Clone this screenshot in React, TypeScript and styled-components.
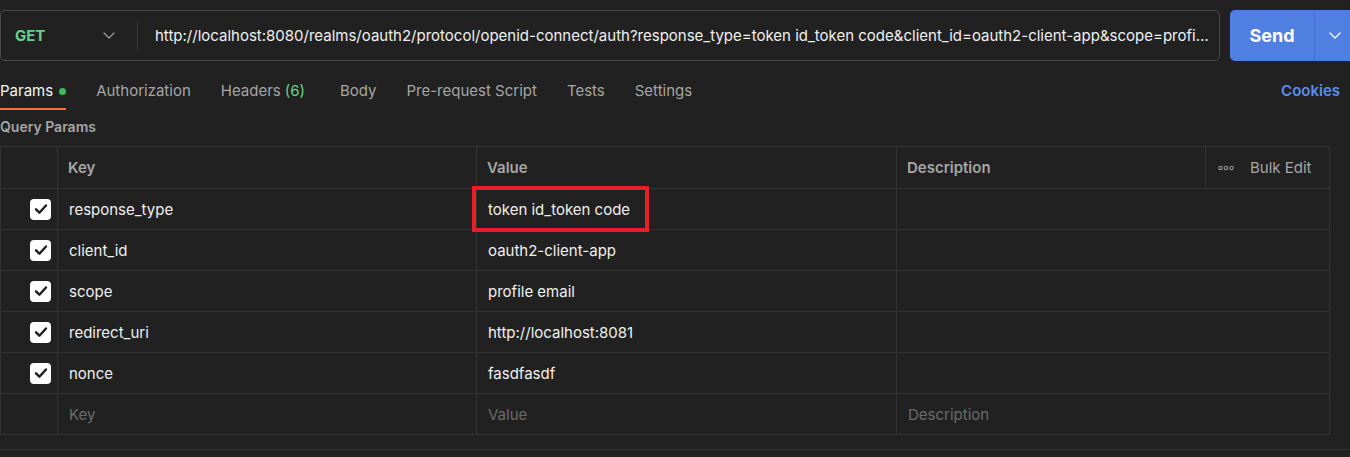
import React from "react";
import styled, { createGlobalStyle } from "styled-components";

const Global = createGlobalStyle`
  html, body { margin: 0; padding: 0; background: #212121; }
  body { font-family: Inter, "Noto Sans", "Liberation Sans", sans-serif; overflow: hidden; width: 1350px; height: 457px; }
`;

const Page = styled.div`
  padding-top: 10px;
  width: 1350px;
  color: #f0f0f0;
`;

const TopBar = styled.div`
  display: flex;
  gap: 10px;
  height: 51px;
  margin-right: -4px;
`;

const UrlBox = styled.div`
  flex: 1;
  min-width: 0;
  display: flex;
  align-items: center;
  border: 1px solid #4a4a4a;
  border-radius: 5px;
  box-sizing: border-box;
`;

const Method = styled.div`
  width: 137px;
  box-sizing: border-box;
  padding: 0 22px 0 14px;
  display: flex;
  align-items: center;
  justify-content: space-between;
  color: #6bcf8a;
  font-weight: 700;
  font-size: 15px;
  border-right: 1px solid #3c3c3c;
  height: 30px;
`;

const UrlText = styled.div`
  flex: 1;
  min-width: 0;
  padding: 0 10px 0 17px;
  font-size: 15px;
  color: #f0f0f0;
  white-space: nowrap;
  overflow: hidden;
  text-overflow: ellipsis;
`;

const SendGroup = styled.div`
  display: flex;
  background: #4f7fe0;
  border-radius: 5px;
  width: 124px;
  flex: none;
`;

const SendMain = styled.div`
  width: 84px;
  display: flex;
  align-items: center;
  justify-content: center;
  color: #fff;
  font-weight: 700;
  font-size: 18px;
  border-right: 1px solid #4472cc;
`;

const SendDrop = styled.div`
  flex: 1;
  display: flex;
  align-items: center;
  justify-content: center;
`;

const Tabs = styled.div`
  display: flex;
  align-items: flex-end;
  margin-top: 11px;
`;

const TabList = styled.div`
  display: flex;
  gap: 30px;
  flex: 1;
`;

const Tab = styled.div<{ $active?: boolean; $extra?: number }>`
  display: flex;
  align-items: center;
  gap: 6px;
  padding: 8px 0 6px;
  margin-right: ${(p) => p.$extra ?? 0}px;
  line-height: 22px;
  font-size: 15px;
  color: ${(p) => (p.$active ? "#f5f5f5" : "#a6a6a6")};
  border-bottom: 2px solid ${(p) => (p.$active ? "#ff6c37" : "transparent")};
`;

const Count = styled.span`
  color: #6bcf8a;
  margin-left: 4px;
`;

const Dot = styled.span`
  width: 7px;
  height: 7px;
  border-radius: 50%;
  background: #3fb95c;
`;

const Cookies = styled.div`
  color: #5b8def;
  font-weight: 600;
  font-size: 15px;
  padding: 8px 10px 8px 0;
  line-height: 22px;
`;

const SectionTitle = styled.div`
  margin-top: 7px;
  margin-bottom: 9px;
  line-height: 20px;
  font-size: 14px;
  font-weight: 600;
  color: #a6a6a6;
`;

const Table = styled.div`
  width: 1330px;
  box-sizing: border-box;
  border: 1px solid #333333;
  border-bottom: none;
`;

const Row = styled.div<{ $head?: boolean }>`
  display: grid;
  grid-template-columns: 56px 419px 420px 1fr;
  height: ${(p) => (p.$head ? "42px" : "41px")};
  box-sizing: border-box;
  border-bottom: 1px solid #333333;
`;

const Cell = styled.div<{ $head?: boolean; $muted?: boolean; $pad?: number }>`
  display: flex;
  align-items: center;
  padding-left: ${(p) => p.$pad ?? 11}px;
  border-left: 1px solid #333333;
  font-size: 15px;
  font-weight: ${(p) => (p.$head ? 600 : 400)};
  color: ${(p) => (p.$head ? "#a6a6a6" : p.$muted ? "#6b6b6b" : "#f0f0f0")};
  min-width: 0;
  &:first-child { border-left: none; justify-content: flex-end; padding: 0 6px 0 0; }
`;

const DescHead = styled(Cell)`
  display: grid;
  grid-template-columns: 1fr 124px;
  padding-left: 0;
`;

const DescLabel = styled.div`
  padding-left: 10px;
  display: flex;
  align-items: center;
`;

const BulkEdit = styled.div`
  display: flex;
  align-items: center;
  gap: 16px;
  padding-left: 12px;
  height: 100%;
  border-left: 1px solid #333333;
  font-weight: 400;
  color: #a6a6a6;
`;

const Check = styled.div`
  width: 21px;
  height: 21px;
  border-radius: 4px;
  background: #ffffff;
  display: flex;
  align-items: center;
  justify-content: center;
`;

const Highlight = styled.span`
  position: relative;
  &::after {
    content: "";
    position: absolute;
    left: -16px;
    right: -19px;
    top: -14px;
    bottom: -13px;
    border: 4.5px solid #e81e2a;
  }
`;

const BottomLine = styled.div`
  margin-top: 14px;
  border-top: 1px solid #333333;
`;

const Chevron = ({ color = "#9a9a9a" }: { color?: string }) => (
  <svg width="12" height="7" viewBox="0 0 12 7" fill="none">
    <path d="M1 1l5 5 5-5" stroke={color} strokeWidth="1.3" strokeLinecap="round" strokeLinejoin="round" />
  </svg>
);

const Dots = () => (
  <svg width="16" height="6" viewBox="0 0 16 6" fill="none">
    <circle cx="2.5" cy="3" r="1.7" stroke="#9a9a9a" strokeWidth="1.1" />
    <circle cx="8" cy="3" r="1.7" stroke="#9a9a9a" strokeWidth="1.1" />
    <circle cx="13.5" cy="3" r="1.7" stroke="#9a9a9a" strokeWidth="1.1" />
  </svg>
);

const CheckBox = () => (
  <Check>
    <svg width="14" height="12" viewBox="0 0 14 12" fill="none">
      <path d="M2 6.3l3.4 3.4L12 2.5" stroke="#1e1e1e" strokeWidth="2.4" strokeLinecap="round" strokeLinejoin="round" />
    </svg>
  </Check>
);

const params = [
  { key: "response_type", value: "token id_token code", mark: true },
  { key: "client_id", value: "oauth2-client-app" },
  { key: "scope", value: "profile email" },
  { key: "redirect_uri", value: "http://localhost:8081" },
  { key: "nonce", value: "fasdfasdf" },
];

export default function App() {
  return (
    <Page>
      <Global />
      <TopBar>
        <UrlBox>
          <Method>
            GET
            <Chevron />
          </Method>
          <UrlText>
            http://localhost:8080/realms/oauth2/protocol/openid-connect/auth?response_type=token id_token code&client_id=oauth2-client-app&scope=profile email&redirect_uri=http://localhost:8081&nonce=fasdfasdf
          </UrlText>
        </UrlBox>
        <SendGroup>
          <SendMain>Send</SendMain>
          <SendDrop>
            <Chevron color="#ffffff" />
          </SendDrop>
        </SendGroup>
      </TopBar>
      <Tabs>
        <TabList>
          <Tab $active>
            Params
            <Dot />
          </Tab>
          <Tab>Authorization</Tab>
          <Tab $extra={5}>
            <span>
              Headers<Count>(6)</Count>
            </span>
          </Tab>
          <Tab>Body</Tab>
          <Tab>Pre-request Script</Tab>
          <Tab>Tests</Tab>
          <Tab>Settings</Tab>
        </TabList>
        <Cookies>Cookies</Cookies>
      </Tabs>
      <SectionTitle>Query Params</SectionTitle>
      <Table>
        <Row $head>
          <Cell $head />
          <Cell $head $pad={10}>Key</Cell>
          <Cell $head $pad={10}>Value</Cell>
          <DescHead $head>
            <DescLabel>Description</DescLabel>
            <BulkEdit>
              <Dots />
              Bulk Edit
            </BulkEdit>
          </DescHead>
        </Row>
        {params.map((p) => (
          <Row key={p.key}>
            <Cell>
              <CheckBox />
            </Cell>
            <Cell>{p.key}</Cell>
            <Cell>{p.mark ? <Highlight>{p.value}</Highlight> : p.value}</Cell>
            <Cell />
          </Row>
        ))}
        <Row>
          <Cell />
          <Cell $muted>Key</Cell>
          <Cell $muted>Value</Cell>
          <Cell $muted>Description</Cell>
        </Row>
      </Table>
      <BottomLine />
    </Page>
  );
}
